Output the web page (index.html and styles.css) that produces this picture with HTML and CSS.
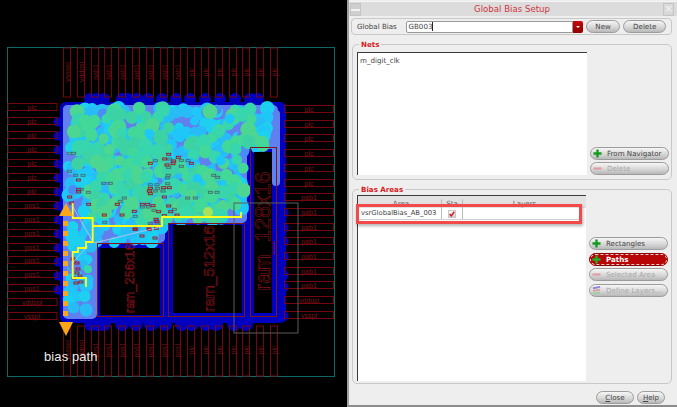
FILE: index.html
```html
<!DOCTYPE html>
<html lang="en">
<head>
    <meta charset="UTF-8" />
    <title>Global Bias Setup</title>
    <link rel="stylesheet" href="styles.css">
</head>
<body>
    <div class="screen">
        <div class="layout">
            <svg id="layoutView" class="layout-view" width="347" height="407" viewBox="0 0 347 407"></svg>
        </div>

        <div class="dialog">
            <div class="titlebar">
                <span class="win-btn"></span>
                <span class="title">Global Bias Setup</span>
                <span class="win-btn win-btn-close">×</span>
            </div>

            <div class="bias-row">
                <span class="bias-label">Global Bias</span>
                <div class="combo"><span class="combo-text">GB003</span></div>
                <span class="combo-arrow"></span>
                <button type="button" class="btn btn-new">New</button>
                <button type="button" class="btn btn-delete">Delete</button>
            </div>

            <div class="group group-nets">
                <span class="group-title">Nets</span>
                <div class="list">m_digit_clk</div>
                <div class="side side-bottom">
                    <button type="button" class="btn btn-icon">
                        <svg class="ico" viewBox="0 0 10 10"><path class="plus" d="M5 0.5v9M0.5 5h9"/></svg>From Navigator
                    </button>
                    <button type="button" class="btn btn-icon btn-off">
                        <svg class="ico" viewBox="0 0 10 10"><path class="minus" d="M0.5 5h9"/></svg>Delete
                    </button>
                </div>
            </div>

            <div class="group group-areas">
                <span class="group-title">Bias Areas</span>
                <div class="table">
                    <div class="thead">
                        <span class="col-area">Area</span>
                        <span class="col-state">Sta</span>
                        <span class="col-layers">Layers</span>
                    </div>
                    <div class="trow">
                        <span class="col-area">vsrGlobalBias_AB_003</span>
                        <span class="col-state"><span class="check">
                            <svg viewBox="0 0 8 8"><path d="M1 4l2 2.5L7 1"/></svg>
                        </span></span>
                        <span class="col-layers"></span>
                    </div>
                    <div class="mark"></div>
                </div>
                <div class="side side-areas">
                    <button type="button" class="btn btn-icon">
                        <svg class="ico" viewBox="0 0 10 10"><path class="plus" d="M5 0.5v9M0.5 5h9"/></svg>Rectangles
                    </button>
                    <button type="button" class="btn btn-icon btn-on">
                        <svg class="ico" viewBox="0 0 10 10"><path class="plus" d="M5 0.5v9M0.5 5h9"/></svg>Paths
                    </button>
                    <button type="button" class="btn btn-icon btn-off">
                        <svg class="ico" viewBox="0 0 10 10"><path class="minus" d="M0.5 5h9"/></svg>Selected Area
                    </button>
                    <button type="button" class="btn btn-icon btn-off">
                        <svg class="ico" viewBox="0 0 10 10">
                            <path class="lay1" d="M1 2.5l8-1.5"/>
                            <path class="lay2" d="M1 5.5l8-1.5"/>
                            <path class="lay3" d="M1 8.5l8-1.5"/>
                        </svg>Define Layers...
                    </button>
                </div>
            </div>

            <div class="footer">
                <button type="button" class="btn btn-close"><u>C</u>lose</button>
                <button type="button" class="btn btn-help"><u>H</u>elp</button>
            </div>
        </div>
    </div>

    <script src="layout.js"></script>
</body>
</html>
```

FILE: styles.css
```css
html, body {
    margin: 0;
    padding: 0;
    background: #000;
}
.screen {
    display: flex;
    width: 677px;
    height: 407px;
    overflow: hidden;
    font-family: "DejaVu Sans", sans-serif;
}
.layout {
    width: 347px;
    height: 407px;
    background: #000;
}
.layout-view {
    display: block;
}

/* layout canvas */
.boundary { fill: none; stroke: #0c6a66; stroke-width: 1; }
.pin { fill: none; stroke: #74060f; stroke-width: 1; }
.pin-text { fill: #7c1018; font: 7px "Liberation Sans", sans-serif; text-anchor: middle; }
.macro-text { fill: none; stroke: #8a1218; stroke-width: 0.55; font-family: "Liberation Sans", sans-serif; }
.macro-box { fill: none; stroke: #7c1418; stroke-width: 1; }
.cell { fill: none; stroke-width: 0.9; }
.guide { fill: none; stroke: #e8c4e4; stroke-width: 0.7; }
.gray-box { fill: none; stroke: #5c5c5c; stroke-width: 1; }
.route { fill: none; stroke: #ffff1e; stroke-width: 1.8; }
.arrow { fill: #f9a61a; }
.path-note { fill: #ececec; font: 13px "Liberation Sans", sans-serif; letter-spacing: 0.1px; }

/* dialog */
.dialog {
    box-sizing: border-box;
    width: 330px;
    height: 407px;
    display: flex;
    flex-direction: column;
    background: #eeeeee;
    border-left: 2px solid #a0a0a0;
    border-bottom: 2px solid #8c8c8c;
    color: #444;
    font-size: 7.1px;
}
.titlebar {
    display: flex;
    align-items: center;
    height: 15px;
    margin-top: 1px;
    background: #dcdcdc;
    border-top: 1px solid #f4f4f4;
    box-sizing: border-box;
}
.title {
    flex: 1;
    text-align: center;
    color: #d0363c;
    font-size: 8.6px;
}
.win-btn {
    box-sizing: border-box;
    width: 11px;
    height: 13px;
    margin-left: 1px;
    background: linear-gradient(#cfcfcf 45%, #f2f2f2 45%, #f2f2f2 60%, #cfcfcf 60%);
    border: 1px solid #c4c4c4;
}
.win-btn-close {
    margin: 0 3px 0 0;
    background: #d8d8d8;
    color: #f4f4f4;
    font-size: 11px;
    line-height: 10px;
    text-align: center;
}
.bias-row {
    box-sizing: border-box;
    display: flex;
    align-items: center;
    height: 17px;
    margin: 2px 5px 0 2px;
    padding: 0 5px 0 5px;
    border: 1px solid #c8c8c8;
    border-radius: 4px;
}
.bias-label {
    width: 49px;
}
.combo {
    box-sizing: border-box;
    width: 169px;
    height: 12px;
    padding-left: 2px;
    background: #fff;
    border: 1px solid #999;
    border-radius: 2px 0 0 2px;
    line-height: 10px;
}
.combo-text {
    border-right: 1px solid #222;
    padding-right: 0;
}
.combo-arrow {
    position: relative;
    width: 10px;
    height: 12px;
    background: linear-gradient(#c80808, #8e0000);
    border-radius: 0 2px 2px 0;
}
.combo-arrow::after {
    content: "";
    position: absolute;
    left: 3px;
    top: 5px;
    border: 2px solid transparent;
    border-top: 2px solid #fff;
}
.btn {
    box-sizing: border-box;
    height: 13px;
    padding: 0;
    font-family: inherit;
    font-size: 7.1px;
    line-height: 11px;
    color: #444;
    background: linear-gradient(#f6f6f6, #d8d8d8 55%, #b8b8b8);
    border: 1px solid #9c9c9c;
    border-radius: 7px;
}
.btn-new {
    width: 35px;
    margin-left: 3px;
}
.btn-delete {
    width: 43px;
    margin-left: 3px;
}
.group {
    position: relative;
    box-sizing: border-box;
    display: flex;
    gap: 3px;
    margin: 0 5px 0 3px;
    padding-left: 4px;
    border: 1px solid #c8c8c8;
    border-radius: 5px;
}
.group-nets {
    height: 136px;
    margin-top: 9px;
    padding-top: 7px;
    padding-bottom: 4px;
}
.group-areas {
    height: 195px;
    margin-top: 9px;
    padding-top: 5px;
    padding-bottom: 2px;
}
.group-title {
    position: absolute;
    left: 6px;
    top: -5px;
    padding: 0 2px;
    background: #eeeeee;
    color: #d81c24;
    font-weight: bold;
    font-size: 7.1px;
    line-height: 9px;
}
.list {
    box-sizing: border-box;
    width: 230px;
    padding: 3px 2px;
    background: #fff;
    border-top: 1px solid #3c3c3c;
    border-left: 1px solid #3c3c3c;
    line-height: 9px;
}
.side {
    display: flex;
    flex-direction: column;
    width: 79px;
}
.side-bottom {
    justify-content: flex-end;
    gap: 2px;
}
.side-areas {
    padding-top: 42px;
    gap: 2.6px;
}
.btn-icon {
    display: flex;
    align-items: center;
    padding-left: 2px;
}
.ico {
    width: 9px;
    height: 9px;
    margin-right: 5px;
    flex: none;
}
.plus { fill: none; stroke: #159a1e; stroke-width: 2.6; }
.minus { fill: none; stroke: #e09ea0; stroke-width: 2.4; }
.lay1 { fill: none; stroke: #8a88d8; stroke-width: 2; }
.lay2 { fill: none; stroke: #e09ea0; stroke-width: 2; }
.lay3 { fill: none; stroke: #9ad09c; stroke-width: 2; }
.btn-off {
    color: #a8a8a8;
}
.btn-on {
    background: #b80606;
    color: #fff;
    font-weight: bold;
    outline: 1px dashed #f6d0d0;
    outline-offset: -2px;
    border-color: #8c0000;
}
.btn-on .plus {
    stroke: #20b028;
}
.table {
    position: relative;
    box-sizing: border-box;
    width: 229px;
    background: #fff;
    border-left: 1px solid #3c3c3c;
}
.thead {
    display: flex;
    height: 13px;
    padding-top: 3px;
    background: #e2e2e2;
    border-top: 1px solid #3c3c3c;
    box-sizing: border-box;
    line-height: 9px;
    text-align: center;
    color: #666;
}
.trow {
    display: flex;
    box-sizing: border-box;
    height: 12px;
    margin-right: 5px;
    background: #fff;
    border-bottom: 1px solid #cfcfcf;
    font-size: 6.8px;
    line-height: 11px;
}
.col-area {
    width: 84px;
    padding-left: 3px;
    box-sizing: border-box;
    border-right: 1px solid #bbb;
    white-space: nowrap;
}
.col-state {
    width: 20px;
    display: flex;
    justify-content: center;
    align-items: center;
    border-right: 1px solid #bbb;
}
.col-layers {
    flex: 1;
}
.check {
    box-sizing: border-box;
    display: block;
    width: 8px;
    height: 8px;
    background: linear-gradient(#fff, #ccc);
    border: 1px solid #c8c8c8;
}
.check svg {
    display: block;
    width: 6px;
    height: 6px;
    fill: none;
    stroke: #d41820;
    stroke-width: 2;
}
.mark {
    position: absolute;
    left: -2px;
    top: 9px;
    width: 226px;
    height: 20px;
    box-sizing: border-box;
    border: 3px solid #f24a4a;
    box-shadow: 1px 2px 3px rgba(0, 0, 0, 0.3);
}
.footer {
    display: flex;
    justify-content: flex-end;
    gap: 3px;
    margin-top: 7px;
    padding-right: 12px;
}
.btn-close {
    width: 38px;
}
.btn-help {
    width: 28px;
}
```

FILE: layout.js
```js
const NS = 'http://www.w3.org/2000/svg';
const view = document.getElementById('layoutView');

function add(tag, attrs, text) {
    const el = document.createElementNS(NS, tag);
    Object.keys(attrs).forEach(k => el.setAttribute(k, attrs[k]));
    if (text) el.textContent = text;
    view.appendChild(el);
    return el;
}

// small seeded generator so every run draws the same blobs
let seed = 20417;
function rnd() {
    seed = (seed * 1664525 + 1013904223) % 4294967296;
    return seed / 4294967296;
}

function inBody(x, y) {
    if (y < 108 || y > 315 || x < 68 || x > 274) return false;
    if (y > 243 && x > 92) return false;
    if (y > 222 && x > 162) return false;
    if (y > 148 && x > 244) return false;
    return true;
}

function inGreen(x, y) {
    if (!inBody(x, y) || x < 73 || x > 264 || y > 222) return false;
    if (y > 205 && x > 225) return false;
    // the upper right and the middle left stay mostly cyan
    if (x > 170 && x < 208 && y < 135) return false;
    return !(x < 90 && y > 165);
}

// jittered grid, so the blobs cover the die instead of clumping
function blobs(step, rMin, rMax, colors, chance, test) {
    for (let gy = 104; gy < 320; gy += step) {
        for (let gx = 64; gx < 280; gx += step) {
            const x = gx + rnd() * step;
            const y = gy + rnd() * step;
            if (!test(x, y) || rnd() > chance) continue;
            add('circle', {
                cx: x.toFixed(1), cy: y.toFixed(1),
                r: (rMin + rnd() * (rMax - rMin)).toFixed(1),
                fill: colors[Math.floor(rnd() * colors.length)]
            });
        }
    }
}

const DARK = '#0000c0';
const PERI = '#5f80ee';

add('rect', { x: 7.5, y: 47.5, width: 327, height: 329, class: 'boundary' });

// dark blue fill and the blobs that stick out of it
add('rect', { x: 60, y: 102, width: 226, height: 221, rx: 6, fill: DARK });
[90, 97, 104, 122, 128, 137, 148, 162, 176, 190, 205, 220, 235, 250, 258].forEach(x => {
    add('circle', { cx: x, cy: 99, r: 6, fill: DARK });
});
[91, 98, 104, 122, 136, 151, 165, 182, 192, 206, 216, 234, 246].forEach(x => {
    add('circle', { cx: x, cy: 324, r: 7, fill: DARK });
});
for (let y = 122; y < 296; y += 14) add('circle', { cx: 58, cy: y, r: 4.5, fill: DARK });
[213, 228, 242, 257, 275, 287, 316].forEach(y => add('circle', { cx: 283, cy: y, r: 5.5, fill: DARK }));

// lighter body
add('rect', { x: 63, y: 105, width: 34, height: 214, rx: 5, fill: PERI });
add('rect', { x: 63, y: 105, width: 184, height: 118, rx: 5, fill: PERI });
add('rect', { x: 63, y: 105, width: 102, height: 138, rx: 5, fill: PERI });
add('rect', { x: 240, y: 105, width: 38, height: 44, rx: 5, fill: PERI });
add('rect', { x: 272, y: 110, width: 8, height: 76, rx: 4, fill: PERI });

blobs(8, 4.5, 7.5, ['#1fc6f8', '#28bcf6', '#1ed0f0'], 0.85, inBody);
blobs(30, 4, 7, [PERI, '#4a8cf2'], 0.6, inBody);
blobs(9, 5, 8, ['#42d898', '#4cd692', '#3cd2a4', '#38d6ac'], 0.8, inGreen);
blobs(34, 4, 6, ['#1fc6f8'], 0.45, inGreen);
blobs(24, 4, 6, ['#38d6ac'], 0.35, (x, y) => inBody(x, y) && y > 225);
add('circle', { cx: 208, cy: 212, r: 5, fill: '#a6e25a' });

// macros
add('rect', { x: 100, y: 248, width: 60, height: 67, fill: '#000' });
add('rect', { x: 173, y: 225, width: 69, height: 88, fill: '#000' });
add('rect', { x: 254, y: 152, width: 18, height: 161, fill: '#000' });
add('rect', { x: 97.5, y: 243.5, width: 66, height: 73, class: 'macro-box' });
add('rect', { x: 168.5, y: 223.5, width: 76, height: 93, class: 'macro-box' });
add('rect', { x: 250.5, y: 147.5, width: 26, height: 169, class: 'macro-box' });
add('text', { class: 'macro-text', 'font-size': 12.5, transform: 'translate(134 313) rotate(-90)' }, 'ram_256x16');
add('text', { class: 'macro-text', 'font-size': 15.5, transform: 'translate(214 312) rotate(-90)' }, 'ram_512x16');
add('text', { class: 'macro-text', 'font-size': 21.5, transform: 'translate(270 291) rotate(-90)' }, 'ram_128x16');

// standard cells picked out of the picture
const cells = [
    [22,37],[35,37],[22,91],[41,103],[63,103],[49,117,1],[125,127],[145,127],[50,145,1],[58,145],[50,153,1],
    [79,154],[23,168,1],[28,186,1],[80,190,1],[166,190,1],[175,181],[187,171],[241,190,1],[257,190,1],
    [273,194,1],[241,198],[259,198],[276,208],[290,212,1],[320,195,1],[337,205],[326,212,1],[345,222,1],
    [307,224,1],[217,211,1],[180,222,1],[127,222,1],[220,226],[128,244],[265,248],[282,235,1],[285,242,1],
    [288,252],[283,262,1],[220,265,1],[262,265,1],[265,131],[285,131],[317,128],[305,140,1],[322,140,1],
    [265,142,1],[287,142],[262,150,1],[280,150],[303,150],[265,158,1],[307,168,1],[377,171],[400,171],
    [445,154],[465,154],[455,103],[467,109],[319,103],[316,111],[265,67,1],[280,59],[320,40,1],[308,54,1],
    [323,54],[349,49,1],[335,60,1],[358,58],[378,59],[388,67,1],[315,72,1],[320,79],[358,76],[333,68,1]
];
cells.forEach(c => {
    add('rect', {
        x: (60 + c[0] / 3).toFixed(1), y: (140 + c[1] / 3).toFixed(1),
        width: 4, height: 2, class: 'cell',
        stroke: c[2] ? '#a01020' : '#4a6a70'
    });
});
[[75,272],[78,275],[72,277],[74,282],[79,281],[71,258],[75,262],[76,268],[147,228],[140,235],[153,237],[133,228]].forEach(c => {
    add('rect', { x: c[0], y: c[1], width: 4, height: 2, class: 'cell', stroke: '#a01020' });
});

// pins
const topNames = ['vsssel', 'vddpsl', 'pab1', 'pab1', 'pab1', 'pab1', 'pab1', 'pab1', 'pab1', 'plc', 'plc', 'plc', 'plc', 'plc', 'plc', 'plc'];
const botNames = ['vsssel', 'vddpsl', 'pos1', 'pos1', 'pos1', 'pos1', 'pos1', 'pos1', 'pos1', 'plc', 'plc', 'plc', 'plc', 'plc', 'plc', 'plc'];
topNames.forEach((name, i) => {
    const x = Math.round(63 + i * 13.8) + 0.5;
    add('rect', { x: x, y: 48, width: 7, height: 49, class: 'pin' });
    add('text', { class: 'pin-text', transform: 'translate(' + (x + 6) + ' 72) rotate(-90)' }, name);
    add('rect', { x: x, y: 326, width: 7, height: 50, class: 'pin' });
    add('text', { class: 'pin-text', transform: 'translate(' + (x + 6) + ' 350) rotate(-90)' }, botNames[i]);
});
const leftNames = ['plc', 'plc', 'plc', 'plc', 'plc', 'plc', 'plc', 'pos1', 'pos1', 'pos1', 'pos1', 'pos1', 'pos1', 'pos1', 'vddspl', 'vsspl'];
leftNames.forEach((name, i) => {
    const y = Math.round(103 + i * 13.95) + 0.5;
    add('rect', { x: 8, y: y, width: 49, height: 7, class: 'pin' });
    add('text', { class: 'pin-text', x: 32, y: y + 6 }, name);
});
const rightNames = ['plc', 'plc', 'plc', 'plc', 'plc', 'plc', 'pab1', 'pab1', 'pab1', 'pab1', 'pab1', 'pab1', 'pab1', 'vddusi', 'vsspl'];
rightNames.forEach((name, i) => {
    const y = Math.round(105 + i * 14.7) + 0.5;
    add('rect', { x: 284.5, y: y, width: 49, height: 7, class: 'pin' });
    add('text', { class: 'pin-text', x: 309, y: y + 6 }, name);
});

// thin routes, gray box, yellow bias route
add('polyline', { points: '73,207 92,240', class: 'guide' });
add('polyline', { points: '73,262 88,246', class: 'guide' });
add('polyline', { points: '94,243 160,227', class: 'guide' });
add('rect', { x: 234, y: 203, width: 64, height: 130, class: 'gray-box' });
add('polyline', { points: '72.7,203 72.7,218 92.7,218 92.7,242 86,242 86,248 78,248 78,252 72.7,252 72.7,278 86,278 86,287', class: 'route' });
add('polyline', { points: '92.7,226 162,226 162,217 241,217 241,212', class: 'route' });

// orange arrow
add('path', { d: 'M66 203L73 216H59Z', class: 'arrow' });
add('path', { d: 'M66 336L73 322H59Z', class: 'arrow' });
for (let y = 221; y < 316; y += 10) {
    add('rect', { x: 63, y: y, width: 5, height: 5, class: 'arrow' });
}
add('text', { x: 44, y: 361, class: 'path-note' }, 'bias path');
```
